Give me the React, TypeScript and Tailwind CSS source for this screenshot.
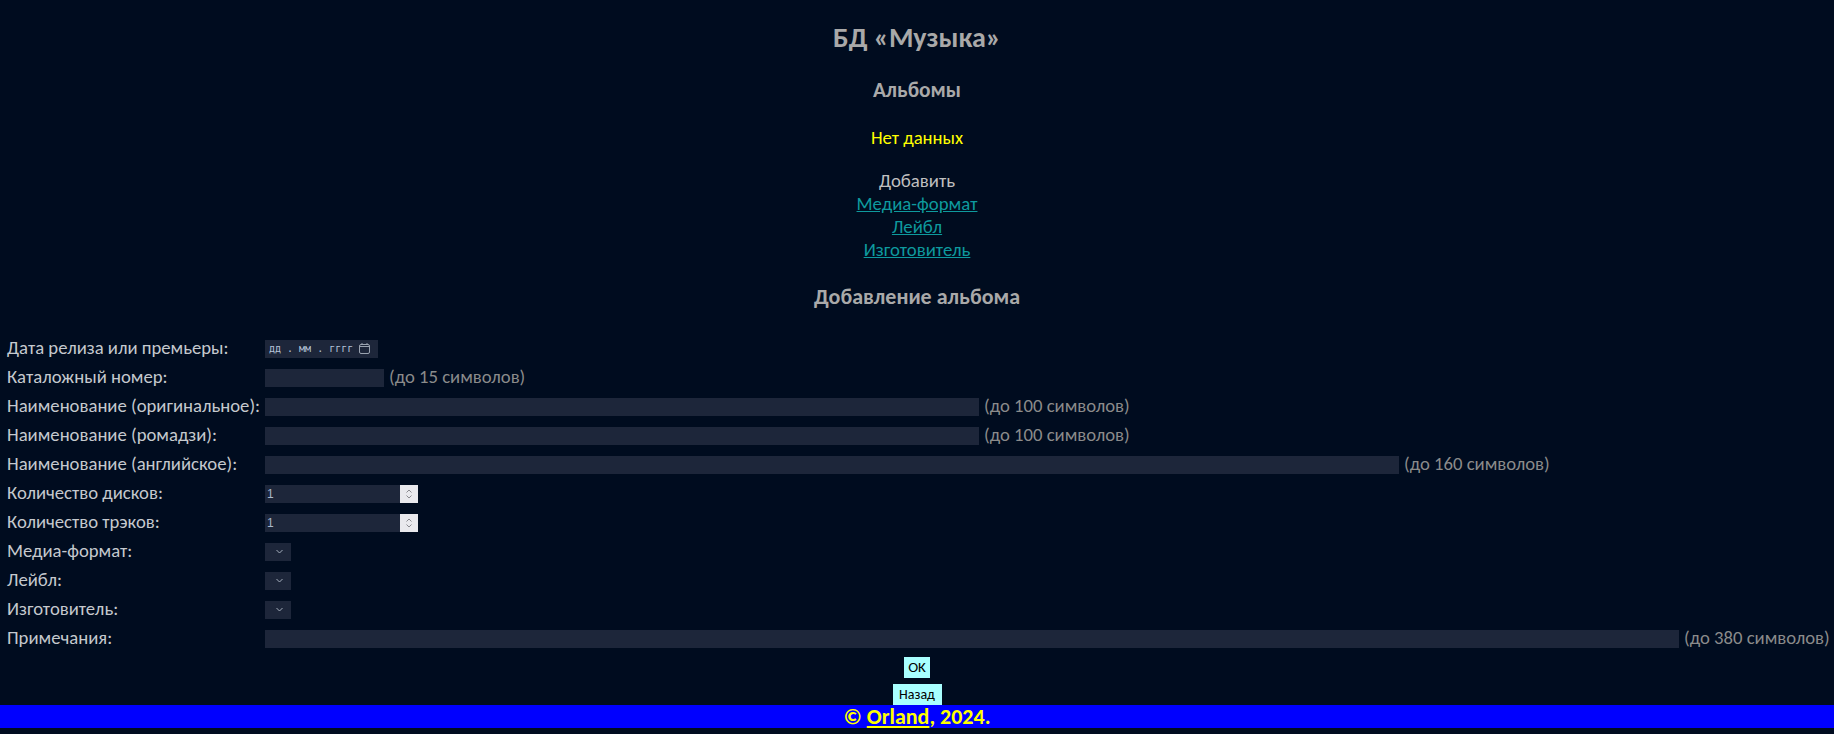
import React from "react";

const font = "font-['Carlito','Calibri','Lato','Liberation_Sans',sans-serif]";

type Row = {
  label: string;
  kind: "date" | "text" | "number" | "select";
  width?: string;
  hint?: string;
};

const rows: Row[] = [
  { label: "Дата релиза или премьеры:", kind: "date" },
  { label: "Каталожный номер:", kind: "text", width: "w-[119px]", hint: "(до 15 символов)" },
  { label: "Наименование (оригинальное):", kind: "text", width: "w-[714px]", hint: "(до 100 символов)" },
  { label: "Наименование (ромадзи):", kind: "text", width: "w-[714px]", hint: "(до 100 символов)" },
  { label: "Наименование (английское):", kind: "text", width: "w-[1134px]", hint: "(до 160 символов)" },
  { label: "Количество дисков:", kind: "number" },
  { label: "Количество трэков:", kind: "number" },
  { label: "Медиа-формат:", kind: "select" },
  { label: "Лейбл:", kind: "select" },
  { label: "Изготовитель:", kind: "select" },
  { label: "Примечания:", kind: "text", width: "w-[1414px]", hint: "(до 380 символов)" },
];

function Field({ row }: { row: Row }) {
  if (row.kind === "date") {
    return (
      <div className="w-[113px] h-[18px] bg-[#1d263a] flex items-center pl-[4px] gap-[5px] whitespace-nowrap">
        <span className="font-['DejaVu_Sans_Mono',monospace] text-[10px] text-[#b4c2d8]">дд . мм . гггг</span>
        <svg width="13" height="13" viewBox="0 0 13 13" fill="none" stroke="#9aa3b0" strokeWidth="1" className="shrink-0">
          <rect x="1.5" y="2.5" width="10" height="9" rx="1.5" />
          <line x1="1.5" y1="4.5" x2="11.5" y2="4.5" />
          <line x1="4" y1="1" x2="4" y2="3" />
          <line x1="9" y1="1" x2="9" y2="3" />
        </svg>
      </div>
    );
  }
  if (row.kind === "number") {
    return (
      <div className="w-[153px] h-[18px] bg-[#1d263a] flex items-center">
        <span className="flex-1 pl-[2px] text-[12px] text-[#a9b8cc] font-['Liberation_Sans',sans-serif]">1</span>
        <span className="w-[18px] h-[18px] bg-[#e9e9ed] flex items-center justify-center">
          <svg width="8" height="12" viewBox="0 0 8 12" fill="none" stroke="#8a8a8f" strokeWidth="1">
            <polyline points="1.5,4.5 4,2 6.5,4.5" />
            <polyline points="1.5,7.5 4,10 6.5,7.5" />
          </svg>
        </span>
      </div>
    );
  }
  if (row.kind === "select") {
    return (
      <div className="w-[26px] h-[18px] bg-[#1d263a] flex items-center justify-end pr-[8px]">
        <svg width="7" height="5" viewBox="0 0 7 5" fill="none" stroke="#a4adbb" strokeWidth="1">
          <polyline points="0.5,1 3.5,4 6.5,1" />
        </svg>
      </div>
    );
  }
  return <input type="text" className={`${row.width} h-[18px] bg-[#1d263a] outline-none border-0`} />;
}

export default function App() {
  return (
    <div className={`min-h-[734px] bg-[#000c1f] ${font} flex flex-col`}>
      <div className="flex flex-col items-center pt-[21px]">
        <h1 className="h-[34px] leading-[34px] text-[28px] font-bold text-[#a9a9a9]">БД «Музыка»</h1>
        <h2 className="mt-[23px] h-[24px] leading-[24px] text-[21.4px] font-bold text-[#a9a9a9]">Альбомы</h2>
        <p className="mt-[25px] h-[22px] leading-[22px] text-[18.7px] text-[#ffff00]">Нет данных</p>
        <div className="mt-[20px] flex flex-col items-center text-[18.8px] leading-[23px]">
          <span className="text-[#c0c0c0]">Добавить</span>
          <a href="#" className="text-[#0e9a9e] underline">Медиа-формат</a>
          <a href="#" className="text-[#0e9a9e] underline">Лейбл</a>
          <a href="#" className="text-[#0e9a9e] underline">Изготовитель</a>
        </div>
        <h2 className="mt-[23px] h-[26px] leading-[26px] text-[22px] font-bold text-[#a9a9a9]">Добавление альбома</h2>
      </div>

      <form className="mt-[24px] flex flex-col" onSubmit={(e) => e.preventDefault()}>
        {rows.map((row) => (
          <div key={row.label} className="h-[29px] flex items-center">
            <label className="w-[265px] shrink-0 pl-[7px] whitespace-nowrap text-[18.7px] text-[#c5c9ce]">{row.label}</label>
            <Field row={row} />
            {row.hint && <span className="ml-[5px] whitespace-nowrap text-[18.7px] text-[#8b8b8b]">{row.hint}</span>}
          </div>
        ))}
        <div className="flex flex-col items-center">
          <button type="submit" className="mt-[4px] w-[26px] h-[21px] bg-[#a8ffff] text-black text-[15px] font-normal leading-[21px]">OK</button>
          <button type="button" className="mt-[6px] w-[49px] h-[21px] bg-[#a8ffff] text-black text-[14px] font-normal leading-[21px]">Назад</button>
        </div>
      </form>

      <footer className="h-[23px] bg-[#0000ff] flex items-center justify-center text-[22px] leading-[23px] font-bold text-[#ffff00]">
        <span>
          © <a href="#" className="underline text-[#ffff00]">Orland</a>, 2024.
        </span>
      </footer>
    </div>
  );
}
